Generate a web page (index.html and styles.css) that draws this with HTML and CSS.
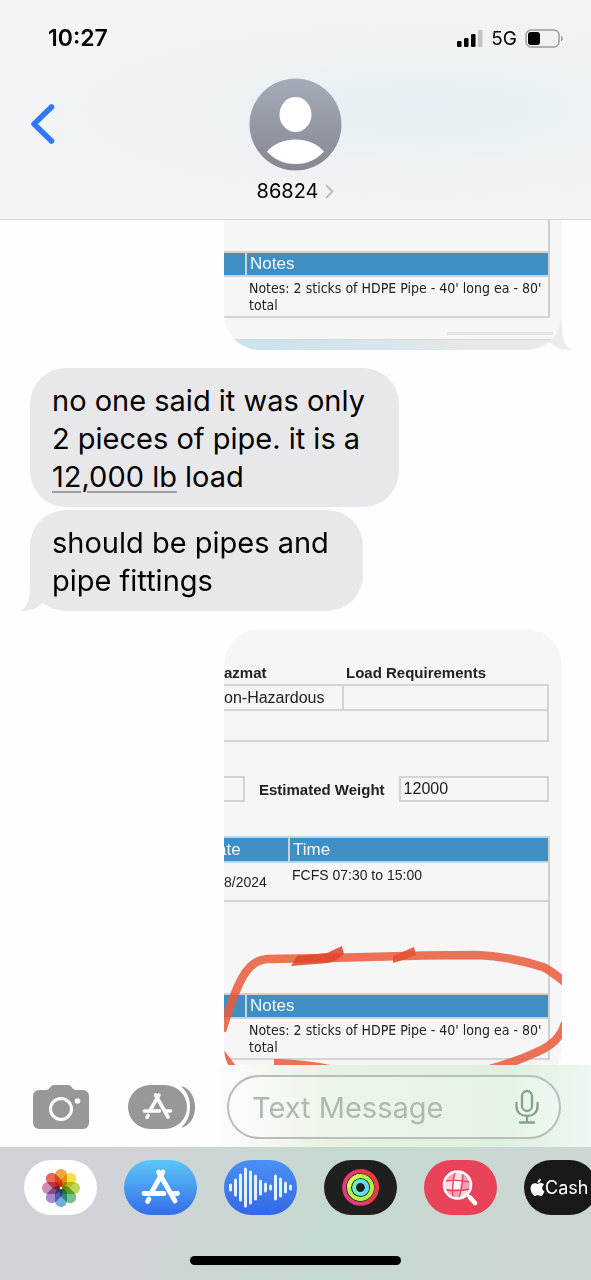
FILE: index.html
```html
<!DOCTYPE html>
<html lang="en">
<head>
    <meta charset="UTF-8">
    <meta name="viewport" content="width=device-width, initial-scale=1.0">
    <title>86824</title>
    <link rel="stylesheet" href="styles.css">
</head>
<body>
    <header class="header">
        <div class="status">
            <span class="time">10:27</span>
            <div class="status-icons">
                <svg width="26" height="18" viewBox="0 0 26 18">
                    <rect x="0" y="12" width="4.500" height="6" rx="1.200"/>
                    <rect x="7" y="9" width="4.500" height="9" rx="1.200"/>
                    <rect x="14" y="5" width="4.500" height="13" rx="1.200"/>
                    <rect x="21" y="1" width="4.500" height="17" rx="1.200" fill="#c2c4c6"/>
                </svg>
                <span class="network">5G</span>
                <svg width="38" height="19" viewBox="0 0 38 19">
                    <rect x="1" y="1" width="33" height="17" rx="5" fill="none" stroke="#9b9d9f" stroke-width="1.500"/>
                    <rect x="3" y="3" width="12" height="13" rx="3"/>
                    <path d="M36 6.500c2.600 1.500 2.600 4.500 0 6z" fill="#9b9d9f"/>
                </svg>
            </div>
        </div>
        <div class="contact-bar">
            <a class="back" href="#" aria-label="Back">
                <svg width="26" height="40" viewBox="0 0 26 40">
                    <path d="M21.500 3 4 20l17.500 17" fill="none" stroke="#3079f6" stroke-width="5.500" stroke-linecap="round" stroke-linejoin="round"/>
                </svg>
            </a>
            <a class="contact" href="#">
                <svg width="93" height="93" viewBox="0 0 93 93">
                    <defs>
                        <linearGradient id="avatarFill" x1="0" y1="0" x2="0" y2="1">
                            <stop offset="0" stop-color="#a6abb9"/>
                            <stop offset="1" stop-color="#858892"/>
                        </linearGradient>
                    </defs>
                    <circle cx="46.500" cy="46.500" r="46" fill="url(#avatarFill)"/>
                    <ellipse cx="46.500" cy="36.500" rx="16" ry="17.500" fill="#fff"/>
                    <path d="M18 73.500c7-8 17-12 28.500-12S68 65.500 75 73.500c-7 8-17 12.500-28.500 12.500S25 81.500 18 73.500z" fill="#fff"/>
                </svg>
                <span class="contact-name">86824
                    <svg width="9" height="15" viewBox="0 0 9 15">
                        <path d="M1.500 1.500 7.500 7.500l-6 6" fill="none" stroke="#b9bcbe" stroke-width="1.800" stroke-linecap="round"/>
                    </svg>
                </span>
            </a>
        </div>
    </header>

    <main class="messages">
        <div class="photo-message">
            <div class="photo photo-top">
                <div class="sheet-frame">
                    <div class="frame-space frame-short"></div>
                    <table class="notes">
                        <thead>
                            <tr><th class="stub"></th><th>Notes</th></tr>
                        </thead>
                        <tbody>
                            <tr><td class="stub"></td><td>Notes: 2 sticks of HDPE Pipe - 40' long ea - 80' total</td></tr>
                        </tbody>
                    </table>
                </div>
                <div class="scrollbar"></div>
                <div class="sheet-bottom"></div>
            </div>
            <svg class="tail tail-right" width="32" height="36" viewBox="0 0 32 36">
                <path d="M22 0v10c0 14 2 22 10 26-9 0-16-2-21-7L0 29V0z" fill="#ececec"/>
            </svg>
        </div>

        <p class="bubble">no one said it was only<br>2 pieces of pipe. it is a<br><a href="#">12,000 lb</a> load</p>
        <p class="bubble">should be pipes and<br>pipe fittings
            <svg class="tail tail-left" width="32" height="36" viewBox="0 0 32 36">
                <path d="M10 0v10c0 14-2 22-10 26 9 0 16-2 21-7l11-9V0z" fill="#e8e8ea"/>
            </svg>
        </p>

        <div class="photo-message">
            <div class="photo photo-sheet">
                <table class="load">
                    <thead>
                        <tr><th>azmat</th><th>Load Requirements</th></tr>
                    </thead>
                    <tbody>
                        <tr><td>on-Hazardous</td><td></td></tr>
                        <tr class="wide"><td colspan="2"></td></tr>
                    </tbody>
                </table>
                <div class="weight">
                    <span class="box box-cut"></span>
                    <b>Estimated Weight</b>
                    <span class="box">12000</span>
                </div>
                <div class="sheet-frame">
                    <table class="schedule">
                        <thead>
                            <tr><th>ate</th><th>Time</th></tr>
                        </thead>
                        <tbody>
                            <tr><td>8/2024</td><td>FCFS 07:30 to 15:00</td></tr>
                        </tbody>
                    </table>
                    <div class="frame-space"></div>
                    <table class="notes">
                        <thead>
                            <tr><th class="stub"></th><th>Notes</th></tr>
                        </thead>
                        <tbody>
                            <tr><td class="stub"></td><td>Notes: 2 sticks of HDPE Pipe - 40' long ea - 80' total</td></tr>
                        </tbody>
                    </table>
                </div>
                <!-- red marker circle over the notes row -->
                <svg class="marker" width="338" height="460" viewBox="0 0 338 460">
                    <g fill="none" stroke="#ea5b3b" stroke-width="8.500" opacity="0.850">
                        <path d="M-2 402C3 386 7 374 12 362C20 342 29 331 43 330L104 329L200 326.500L253 326C275 327 300 332 319 338C326 341 333 347 342 354"/>
                        <path d="M341 394C337 410 325 418 313 423C300 429 282 436 262 441"/>
                        <path d="M50 434.500C75 435 100 438 125 445" stroke-width="9"/>
                        <path d="M-3 423 14 445" stroke-width="7"/>
                    </g>
                    <path d="M67 337 73 327 103 324 118 317 120 325C113 331 109 333 104 334z" fill="#e24327" opacity="0.850"/>
                    <path d="M169 334v-7l21-9 2 8-10 4z" fill="#e65235" opacity="0.900"/>
                </svg>
            </div>
        </div>
    </main>

    <form class="composer">
        <button type="button" class="icon-button" aria-label="Camera">
            <svg width="56" height="44" viewBox="0 0 56 44">
                <path d="M6 5h7c2 0 3-1 4-2.500C18.500.5 19.500 0 22 0h12c2.500 0 3.500.5 5 2.500C40 4 41 5 43 5h7a6 6 0 0 1 6 6v27a6 6 0 0 1-6 6H6a6 6 0 0 1-6-6V11a6 6 0 0 1 6-6z" fill="#989898"/>
                <circle cx="28" cy="24" r="10.500" fill="none" stroke="#fff" stroke-width="3"/>
                <circle cx="44.500" cy="16" r="2.800" fill="#fff"/>
            </svg>
        </button>
        <button type="button" class="icon-button" aria-label="Apps">
            <svg width="68" height="44" viewBox="0 0 68 44">
                <path d="M53 1.500c3-.5 14 5 14 20.500S56 43 53 42.500c12-9 12-32 0-41z" fill="#989898"/>
                <rect width="59" height="44" rx="22" fill="#989898"/>
                <g fill="none" stroke="#fff" stroke-width="3.600" stroke-linecap="round">
                    <path d="M31 10 22 25.500M27.500 10 40 32M16.500 26H31.500M38 26h4.500M19 32.300l1.200-1.800"/>
                </g>
            </svg>
        </button>
        <div class="field">
            <input type="text" placeholder="Text Message" aria-label="Text Message">
            <button type="button" class="icon-button" aria-label="Dictate">
                <svg width="24" height="36" viewBox="0 0 24 36">
                    <g fill="none" stroke="#87a18e" stroke-width="2.300" stroke-linecap="round">
                        <rect x="7" y="2" width="10" height="20" rx="5"/>
                        <path d="M1.500 14v3.500c0 6 4.500 9.500 10.500 9.500s10.500-3.500 10.500-9.500V14M12 27v6M5 33.500h14"/>
                    </g>
                </svg>
            </button>
        </div>
    </form>

    <footer class="drawer">
        <nav class="apps">
            <button class="app app-photos" aria-label="Photos">
                <svg width="40" height="40" viewBox="-20 -20 40 40">
                    <g class="petals">
                        <rect x="-6" y="-19" width="12" height="19" rx="6" fill="#f2a33c"/>
                        <rect x="-6" y="-19" width="12" height="19" rx="6" fill="#f0e23c" transform="rotate(45)"/>
                        <rect x="-6" y="-19" width="12" height="19" rx="6" fill="#bcd85a" transform="rotate(90)"/>
                        <rect x="-6" y="-19" width="12" height="19" rx="6" fill="#74c08a" transform="rotate(135)"/>
                        <rect x="-6" y="-19" width="12" height="19" rx="6" fill="#74ade0" transform="rotate(180)"/>
                        <rect x="-6" y="-19" width="12" height="19" rx="6" fill="#a58bc8" transform="rotate(225)"/>
                        <rect x="-6" y="-19" width="12" height="19" rx="6" fill="#cf8bb8" transform="rotate(270)"/>
                        <rect x="-6" y="-19" width="12" height="19" rx="6" fill="#e8685a" transform="rotate(315)"/>
                    </g>
                    <circle r="1.300" fill="#fff"/>
                </svg>
            </button>
            <button class="app app-store" aria-label="App Store">
                <svg width="73" height="55" viewBox="0 0 73 55">
                    <g fill="none" stroke="#fff" stroke-width="4.800" stroke-linecap="round">
                        <path d="M39 12 27.500 32.500M34.500 12 51 41M20 33.500H40M49 33.500h4.500M23.500 41.500l1.500-2.500"/>
                    </g>
                </svg>
            </button>
            <button class="app app-audio" aria-label="Audio">
                <svg width="73" height="55" viewBox="0 0 73 55">
                    <path d="M6.500 25v5M11.500 20v15M16.500 15v25M21.500 9v37M26.500 12v31M31.500 16v23M36.500 21v13M41.500 24v7M46.500 26v3M51.500 16v23M56.500 19v17M61.500 23v9M66.500 26v3" fill="none" stroke="#e4f2ff" stroke-width="3" stroke-linecap="round"/>
                </svg>
            </button>
            <button class="app app-activity" aria-label="Activity">
                <svg width="73" height="55" viewBox="0 0 73 55">
                    <g fill="none" stroke-width="4">
                        <circle cx="36.500" cy="27.500" r="16.300" stroke="#e5397a"/>
                        <path d="M36.500 11.200a16.300 16.300 0 0 1 8 30.500" stroke="#ee3c3c"/>
                        <circle cx="36.500" cy="27.500" r="11.500" stroke="#b2f54a"/>
                        <path d="M25 27.500a11.500 11.500 0 0 1 11.500-11.500" stroke="#d5f94c"/>
                        <circle cx="36.500" cy="27.500" r="6.500" stroke="#68f0c4"/>
                        <path d="M36.500 21a6.500 6.500 0 0 1 0 13" stroke="#5edcec"/>
                    </g>
                </svg>
            </button>
            <button class="app app-images" aria-label="Images">
                <svg width="73" height="55" viewBox="0 0 73 55">
                    <circle cx="33.500" cy="25" r="13.500" fill="#f5a3b0"/>
                    <path d="M31 12h7l-1 8h-7zM20 21h9l-1 8h-8zM37 30h7l-4 7h-4z" fill="#fbdfe3"/>
                    <path d="M30 21h7l-1 8h-7z" fill="#fff"/>
                    <path d="M31 12c-2 8-3 17-2 26M39 12c0 8-1 17-4 26M20 21c9-1 18-1 26 1M20 30c9 1 18 1 26-1" fill="none" stroke="#e94359" stroke-width="1.300"/>
                    <circle cx="33.500" cy="25" r="13.500" fill="none" stroke="#fff" stroke-width="2.600"/>
                    <path d="m43 34.500 3 3" stroke="#fff" stroke-width="2.600"/>
                    <path d="m46 37.500 5 5.500" stroke="#fff" stroke-width="4.600" stroke-linecap="round"/>
                </svg>
            </button>
            <button class="app app-cash">
                <svg width="15" height="17" viewBox="2 0 20 24">
                    <path fill="#fff" d="M12.152 6.896c-.948 0-2.415-1.078-3.960-1.040-2.040.027-3.910 1.183-4.961 3.014-2.117 3.675-.546 9.103 1.519 12.090 1.013 1.454 2.208 3.090 3.792 3.039 1.520-.065 2.090-.987 3.935-.987 1.831 0 2.350.987 3.960.948 1.637-.026 2.676-1.480 3.676-2.948 1.156-1.688 1.636-3.325 1.662-3.415-.039-.013-3.182-1.221-3.220-4.857-.026-3.040 2.480-4.494 2.597-4.559-1.429-2.090-3.623-2.324-4.390-2.376-2-.156-3.675 1.090-4.610 1.090zM15.530 3.830c.843-1.012 1.400-2.427 1.245-3.830-1.207.052-2.662.805-3.532 1.818-.780.896-1.454 2.338-1.273 3.714 1.338.104 2.715-.688 3.559-1.701"/>
                </svg>
                Cash
            </button>
        </nav>
        <div class="home-bar"></div>
    </footer>
</body>
</html>
```

FILE: styles.css
```css
* {
    box-sizing: border-box;
}
body {
    display: flex;
    flex-direction: column;
    height: 100vh;
    margin: 0;
    overflow: hidden;
    background-color: #fefefe;
    color: #000;
    font-family: Inter, "Liberation Sans", sans-serif;
}
a {
    color: inherit;
    text-decoration: none;
}
button {
    padding: 0;
    border: none;
    background: none;
    font-family: inherit;
}
svg {
    display: block;
}

/* header */
.header {
    flex: none;
    padding: 24px 28px 15px;
    border-bottom: 1px solid #d4d5d5;
    background: radial-gradient(ellipse at 72% 50%, #e6eff3 0%, #eef2f4 42%, #f4f4f4 75%);
}
.status {
    display: flex;
    justify-content: space-between;
    align-items: center;
    height: 28px;
    padding-left: 20px;
}
.time {
    font-size: 23px;
    font-weight: 600;
}
.status-icons {
    display: flex;
    align-items: center;
    gap: 8px;
}
.network {
    font-size: 19px;
}
.contact-bar {
    display: grid;
    grid-template-columns: 1fr auto 1fr;
    margin-top: 26px;
}
.back {
    justify-self: start;
    margin-top: 26px;
    padding-left: 2px;
}
.contact {
    display: flex;
    flex-direction: column;
    align-items: center;
    gap: 7px;
}
.contact-name {
    display: flex;
    align-items: center;
    gap: 7px;
    font-size: 20px;
    line-height: 26px;
}

/* messages */
.messages {
    display: flex;
    flex: 1;
    flex-direction: column;
    align-items: flex-start;
    min-height: 0;
    padding: 0 29px 0 30px;
    overflow: hidden;
}
.bubble {
    position: relative;
    flex: none;
    margin: 0 0 3px;
    padding: 14px 34px 11px 22px;
    border-radius: 36px;
    background-color: #e8e8ea;
    font-size: 29px;
    line-height: 38px;
}
.bubble a {
    text-decoration: underline;
    text-decoration-color: #9c9c9e;
    text-decoration-thickness: 2px;
    text-underline-offset: 4px;
}
.tail {
    position: absolute;
    bottom: 0;
    z-index: -1;
}
.tail-left {
    left: -10px;
}
.tail-right {
    right: -10px;
}
.bubble,
.photo-message {
    z-index: 0;
}
.photo-message {
    position: relative;
    flex: none;
    align-self: flex-end;
    width: 338px;
    max-width: 100%;
    margin-bottom: 18px;
}
.bubble + .photo-message {
    margin-top: 15px;
}
.photo {
    position: relative;
    overflow: hidden;
    background-color: #f6f6f6;
    color: #222;
    font-family: "Liberation Sans", Arial, sans-serif;
    font-size: 15px;
}
.photo-top {
    border-radius: 0 0 36px 36px;
}
.photo-sheet {
    padding: 32px 0 24px;
    border-radius: 36px;
}

/* load sheet shown in the pictures */
.photo table {
    width: 100%;
    border-collapse: collapse;
    table-layout: fixed;
}
.photo th {
    text-align: left;
}
.photo th,
.photo td {
    padding: 0 3px;
    vertical-align: middle;
}
.photo td {
    border: 2px solid #d4d4d4;
    border-left: none;
}
.photo .load {
    width: 325px;
}
.load th {
    height: 24px;
}
.load td {
    height: 25px;
    font-size: 16px;
}
.load th:first-child,
.load td:first-child {
    width: 119px;
    padding: 0;
}
.load .wide td {
    height: 31px;
}
.weight {
    display: flex;
    align-items: center;
    gap: 14px;
    width: 325px;
    margin: 34px 0;
}
.box {
    flex: 1;
    height: 26px;
    padding-left: 3px;
    border: 2px solid #d4d4d4;
    font-size: 16px;
    line-height: 22px;
}
.box-cut {
    flex: none;
    width: 21px;
    border-left: none;
}
.sheet-frame {
    width: 326px;
    border-right: 2px solid #d0d0d0;
}
.sheet-frame th {
    height: 25px;
    border: 2px solid #d0d0d0;
    border-left: none;
    background-color: #3f8fc5;
    color: #f3f9fd;
    font-size: 17px;
    font-weight: normal;
}
.sheet-frame td {
    border-right: none;
}
.sheet-frame th:last-child {
    border-right: none;
}
.schedule td {
    height: 39px;
    font-size: 14px;
}
.schedule th:first-child,
.schedule td:first-child {
    width: 65px;
    padding-left: 0;
}
.schedule td:last-child {
    padding-top: 4px;
    vertical-align: top;
}
.schedule th:first-child {
    text-indent: -7px;
}
.frame-space {
    height: 91px;
}
.frame-short {
    height: 31px;
}
.notes .stub {
    width: 22px;
}
.notes th {
    height: 24px;
}
.notes td {
    height: 41px;
    padding-right: 0;
    font-family: "DejaVu Sans Condensed", "DejaVu Sans", sans-serif;
    font-size: 14px;
    line-height: 17px;
}
.marker {
    position: absolute;
    top: 0;
    left: 0;
}
.scrollbar {
    width: 106px;
    height: 3px;
    margin: 14px 9px 4px auto;
    background-color: #e4e4e4;
}
.sheet-bottom {
    height: 11px;
    border-top: 1px solid #d9d9d9;
    background: linear-gradient(90deg, #c9e3ee 0%, #d6e6ec 45%, #e8e8e8 75%);
}

/* text box row */
.composer {
    display: flex;
    flex: none;
    align-items: center;
    gap: 39px;
    padding: 10px 30px 8px 33px;
    background: linear-gradient(90deg, #fefefe 35%, #e8f2e4 55%, #dcf0df 85%, #edf8f0 100%);
}
.field {
    display: flex;
    flex: 1;
    align-items: center;
    min-width: 0;
    height: 64px;
    margin-left: -8px;
    padding: 0 20px 0 23px;
    border: 2px solid #b7bfb8;
    border-radius: 32px;
    background-color: rgba(255, 255, 255, 0.25);
}
.field input {
    flex: 1;
    min-width: 0;
    padding: 0;
    border: none;
    outline: none;
    background: none;
    font-family: inherit;
    font-size: 29px;
}
.field input::placeholder {
    color: #afb9b0;
    opacity: 1;
}

/* app drawer */
.drawer {
    flex: none;
    padding: 13px 0 15px;
    background: linear-gradient(100deg, #d1d2d8 0%, #d0d3d7 25%, #c5d9cf 55%, #c9d8d2 80%, #ced5d3 100%);
}
.apps {
    display: flex;
    gap: 27px;
    padding-left: 24px;
    overflow: hidden;
}
.app {
    display: flex;
    flex: none;
    align-items: center;
    justify-content: center;
    width: 73px;
    height: 55px;
    border-radius: 28px;
}
.app-photos {
    background-color: #fff;
}
.petals rect {
    mix-blend-mode: multiply;
}
.app-store {
    background: linear-gradient(#5ac8f7, #356de9);
}
.app-audio {
    background: linear-gradient(#4b90f5, #3467e6);
}
.app-activity {
    background-color: #1f1f1f;
}
.app-images {
    background-color: #e94359;
}
.app-cash {
    justify-content: flex-start;
    padding-left: 6px;
    background-color: #191918;
    color: #fff;
    font-size: 18px;
}
.home-bar {
    width: 211px;
    height: 9px;
    margin: 41px auto 0;
    border-radius: 5px;
    background-color: #000;
}
```
